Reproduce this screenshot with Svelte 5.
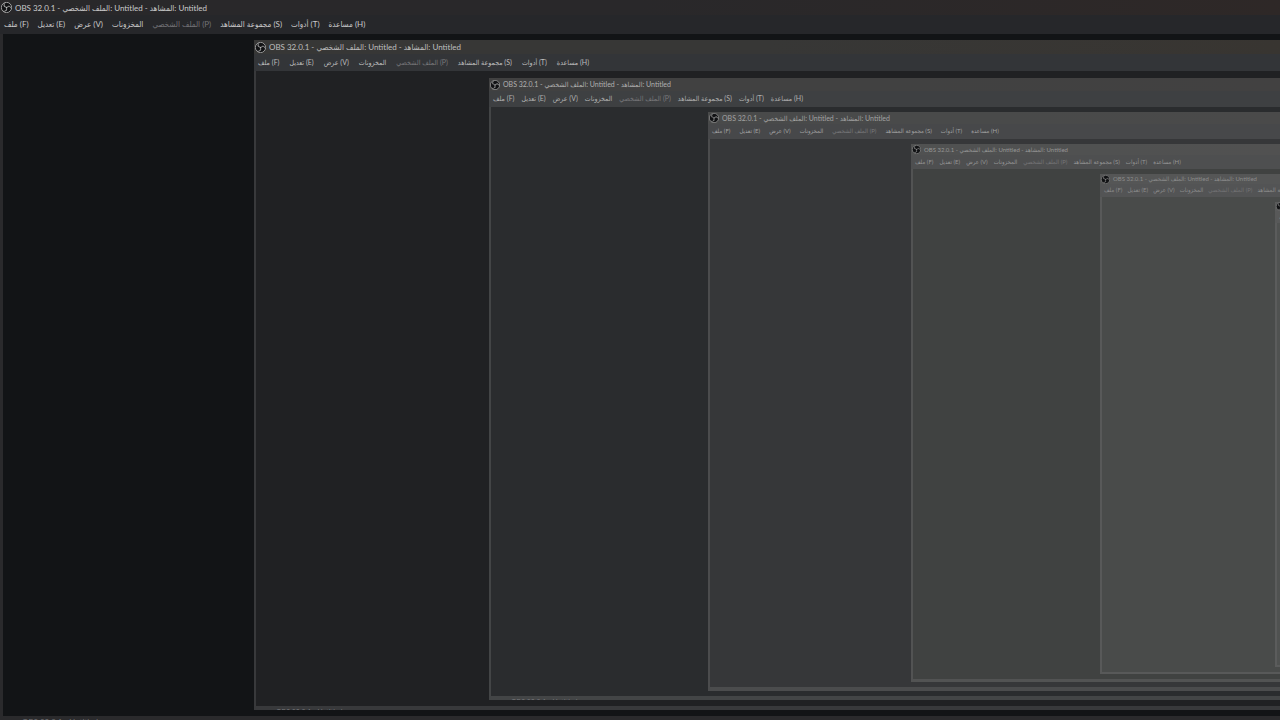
<script>
  const menus = [
    { label: 'ملف (F)' },
    { label: 'تعديل (E)' },
    { label: 'عرض (V)' },
    { label: 'المخزونات' },
    { label: 'الملف الشخصي (P)', disabled: true },
    { label: 'مجموعة المشاهد (S)' },
    { label: 'أدوات (T)' },
    { label: 'مساعدة (H)' }
  ];

  // every capture of the screen is a little smaller and paler than the one around it
  const levels = [
    { size: 8, menu: 8, gap: 9, bar: 15, row: 19, edge: 3, foot: 4, left: 251, top: 6, bottom: 6, title: '#29282a', end: '#2e2827', strip: '#26272a', canvas: '#121416', line: '#2a2a2c', text: '#cacaca', dim: '#727276' },
    { size: 8, menu: 7, gap: 10, bar: 14, row: 17, edge: 2, foot: 4, left: 233, top: 7, bottom: 6, title: '#373736', end: '#383531', strip: '#333538', canvas: '#202123', line: '#38393b', text: '#bebebe', dim: '#77777a' },
    { size: 7, menu: 7, gap: 7, bar: 13, row: 16, edge: 2, foot: 4, left: 217, top: 5, bottom: 5, title: '#414141', end: '#424141', strip: '#3e4042', canvas: '#2a2c2e', line: '#434546', text: '#b0b0b0', dim: '#77777a' },
    { size: 7, menu: 6, gap: 9, bar: 12, row: 15, edge: 2, foot: 4, left: 201, top: 5, bottom: 5, title: '#494a4a', end: '#4a4a4a', strip: '#47484a', canvas: '#363739', line: '#4b4c4d', text: '#a2a2a2', dim: '#78787a' },
    { size: 6, menu: 6, gap: 6, bar: 11, row: 14, edge: 2, foot: 3, left: 187, top: 5, bottom: 5, title: '#505151', end: '#515151', strip: '#4e4f50', canvas: '#404241', line: '#525353', text: '#969696', dim: '#757577' },
    { size: 6, menu: 6, gap: 5, bar: 10, row: 13, edge: 2, foot: 2, left: 173, top: 5, bottom: 5, title: '#555656', end: '#555656', strip: '#535455', canvas: '#494b4a', line: '#585959', text: '#8c8c8c', dim: '#727274' },
    { size: 6, menu: 6, gap: 5, bar: 9, row: 12, edge: 2, foot: 2, left: 0, top: 0, bottom: 0, title: '#5a5b5b', end: '#5a5b5b', strip: '#585959', canvas: '#505251', line: '#5b5c5c', text: '#858585', dim: '#707070' }
  ];
</script>

{#snippet obs(i)}
  {@const l = levels[i]}
  <section
    class="window"
    style="--size:{l.size}px; --menu:{l.menu}px; --gap:{l.gap}px; --bar:{l.bar}px; --row:{l.row}px; --edge:{l.edge}px; --foot:{l.foot}px; --left:{l.left}px; --top:{l.top}px; --bottom:{l.bottom}px; --title:{l.title}; --end:{l.end}; --strip:{l.strip}; --canvas:{l.canvas}; --line:{l.line}; --text:{l.text}; --dim:{l.dim}"
  >
    <header class="titlebar">
      <svg class="logo" viewBox="0 0 24 24" aria-hidden="true">
        <circle cx="12" cy="12" r="11.2" fill="#111214" stroke="currentColor" stroke-width="1.6" />
        <path fill="currentColor" stroke="currentColor" stroke-width="0.6" d="M6.182 5.99c.352-1.698 1.503-3.229 3.05-3.996-.269.273-.595.483-.844.78-1.02 1.1-1.48 2.692-1.199 4.156.355 2.235 2.455 4.06 4.732 4.028 1.765.079 3.485-.937 4.348-2.468 1.848.063 3.645 1.017 4.7 2.548.54.799.962 1.736.991 2.711-.342-1.295-1.202-2.446-2.375-3.095-1.135-.639-2.529-.802-3.772-.425-1.56.448-2.849 1.723-3.293 3.293-.377 1.25-.216 2.628.377 3.772-.825 1.429-2.315 2.449-3.932 2.756-1.244.261-2.551.059-3.709-.464 1.036.302 2.161.355 3.191-.011 1.381-.457 2.522-1.567 3.024-2.935.556-1.49.345-3.261-.591-4.54-.7-1.007-1.803-1.717-3.002-1.969-.38-.068-.764-.098-1.148-.134-.611-1.231-.834-2.66-.548-4.007z" />
      </svg>
      <span>OBS 32.0.1 - الملف الشخصي: Untitled - المشاهد: Untitled</span>
    </header>
    <nav class="menubar">
      {#each menus as menu}
        <button type="button" disabled={menu.disabled}>{menu.label}</button>
      {/each}
    </nav>
    <div class="canvas">
      {#if i < levels.length - 1}
        {@render obs(i + 1)}
      {/if}
    </div>
    <footer class="foot"><span>OBS 32.0.1 - Untitled</span></footer>
  </section>
{/snippet}

<main>
  {@render obs(0)}
</main>

<style>
  :global(body) {
    margin: 0;
    background: #121416;
  }

  main {
    display: flex;
    height: 100vh;
    overflow: hidden;
    font-family: Lato, 'DejaVu Sans Condensed', 'DejaVu Sans', sans-serif;
  }

  .window {
    display: flex;
    flex: 1;
    flex-direction: column;
    min-width: 0;
    min-height: 0;
    overflow: hidden;
    background: var(--line);
    color: var(--text);
  }

  .titlebar {
    display: flex;
    flex: none;
    align-items: center;
    gap: 3px;
    height: var(--bar);
    padding-left: 1px;
    background: linear-gradient(to right, var(--title) 50%, var(--end));
    font-size: var(--size);
    line-height: 1;
    white-space: nowrap;
  }

  .logo {
    flex: none;
    width: calc(var(--size) + 3px);
    height: calc(var(--size) + 3px);
  }

  .menubar {
    display: flex;
    flex: none;
    align-items: center;
    gap: var(--gap);
    box-sizing: border-box;
    height: var(--row);
    padding: 0 0 1px 4px;
    background: var(--strip);
  }

  button {
    flex: none;
    padding: 0;
    border: 0;
    background: none;
    color: inherit;
    font-family: inherit;
    font-size: var(--menu);
    line-height: 1;
    white-space: nowrap;
  }

  button:disabled {
    color: var(--dim);
  }

  .canvas {
    display: flex;
    flex: 1;
    min-height: 0;
    margin-left: var(--edge);
    padding: var(--top) 0 var(--bottom) var(--left);
    background: var(--canvas);
  }

  .foot {
    flex: none;
    box-sizing: border-box;
    height: var(--foot);
    padding: 2px 0 0 22px;
    overflow: hidden;
    color: var(--dim);
    font-size: var(--menu);
    line-height: 8px;
  }
</style>
